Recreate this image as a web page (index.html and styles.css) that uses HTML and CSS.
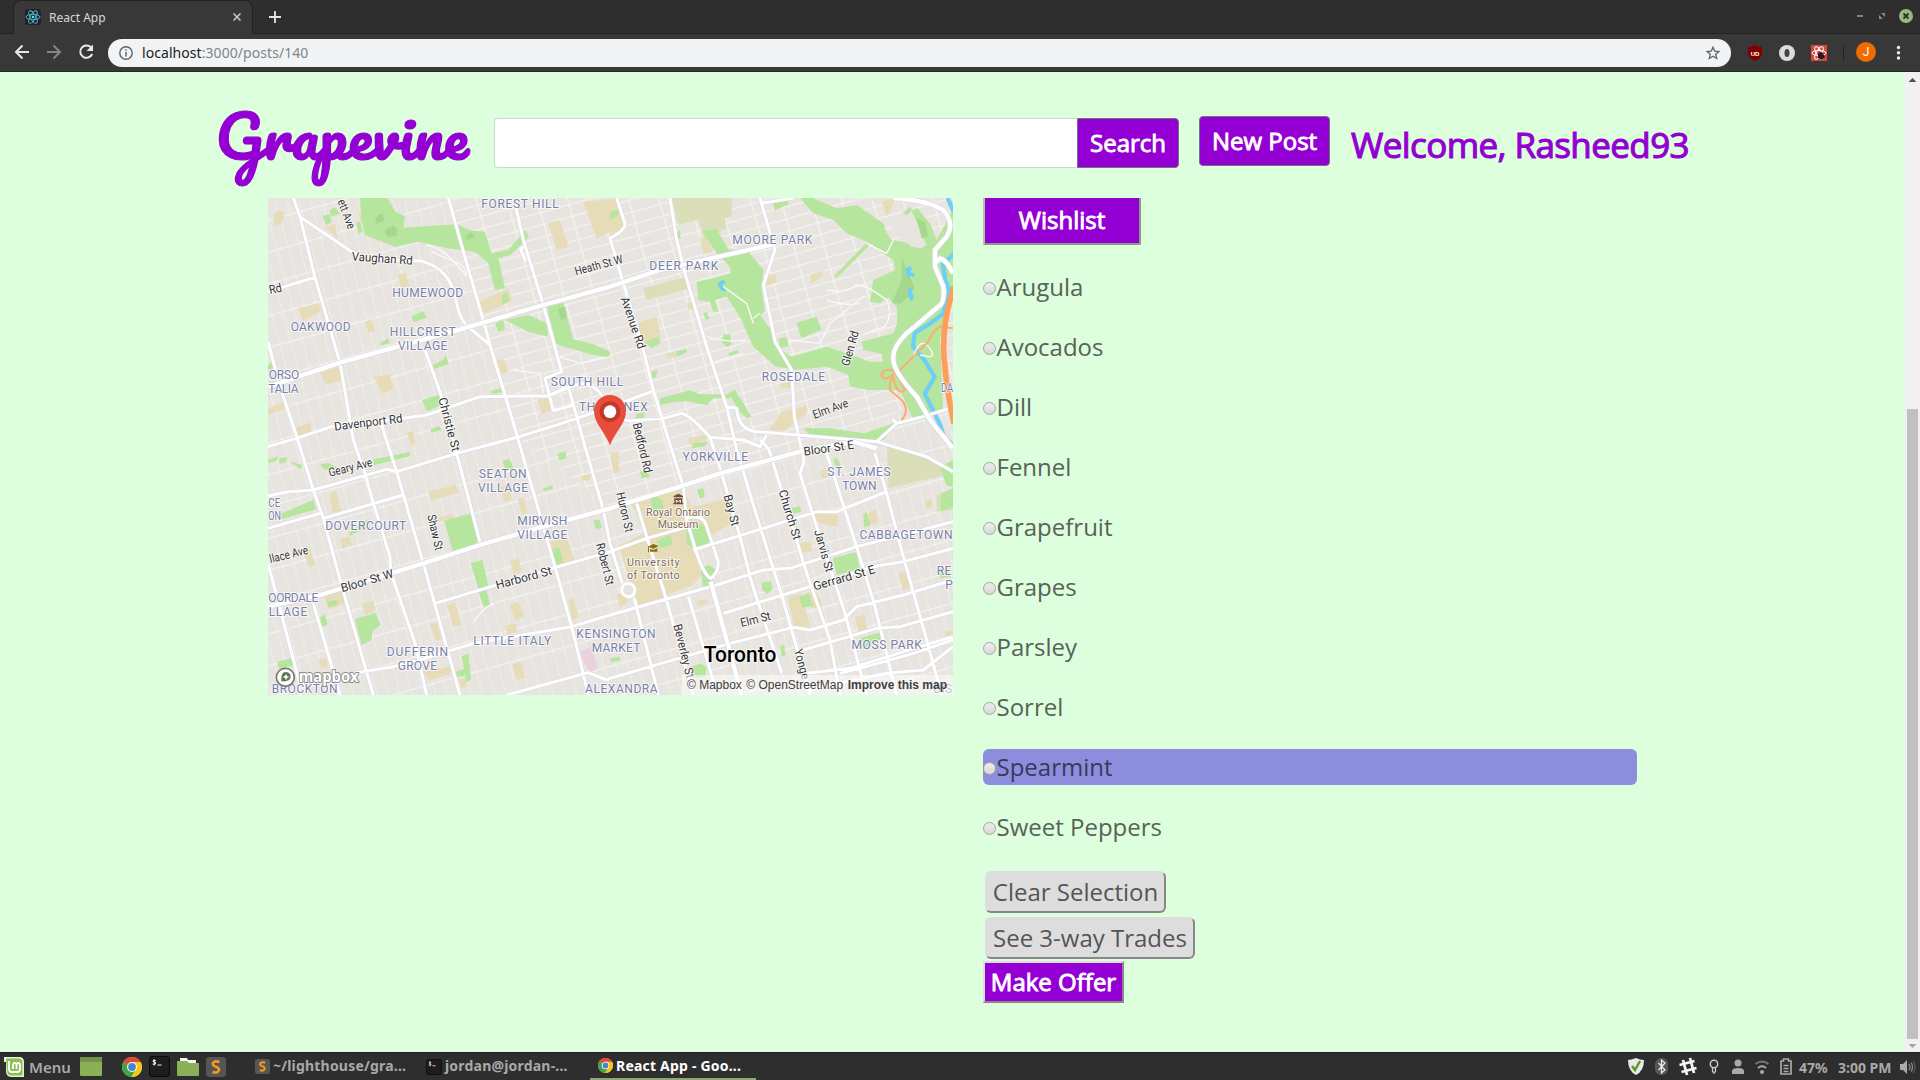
FILE: index.html
```html
<!DOCTYPE html>
<html lang="en">
<head>
<meta charset="utf-8">
<title>React App</title>
<link rel="stylesheet" href="styles.css">
</head>
<body>
<svg width="0" height="0" class="defs">
  <symbol id="chrome" viewBox="0 0 20 20">
    <circle cx="10" cy="10" r="10" fill="#f7c61b"/>
    <path d="M10 10 1.3 5A10 10 0 0 1 18.7 5Z" fill="#e2483a"/>
    <path d="M10 10 1.3 5A10 10 0 0 0 9 20L14 12Z" fill="#3fa24f"/>
    <path d="M10 5h8.7a10 10 0 0 1-9 15L14.3 12.5Z" fill="#f7c61b"/>
    <circle cx="10" cy="10" r="5" fill="#fff"/><circle cx="10" cy="10" r="3.9" fill="#4586c8"/>
  </symbol>
  <symbol id="term" viewBox="0 0 20 20">
    <rect x=".5" y=".5" width="19" height="19" rx="3" fill="#1d1d1d" stroke="#0b0b0b"/>
    <path d="M6.500 4.500C5 3.500 3.800 4.200 4 5s2.300.9 2.300 2S4.500 8.200 3.500 7.500M5 3v6M8 8.500h4" fill="none" stroke="#eee" stroke-width="1"/>
  </symbol>
  <symbol id="subl" viewBox="0 0 20 20">
    <rect width="20" height="20" rx="3" fill="#565656"/>
    <path d="M13.500 5Q9 3.500 7.300 5.500T9 9.300L11.500 10.500Q14 12 12.300 14.200T6.500 15" fill="none" stroke="#f79a1e" stroke-width="2.600"/>
  </symbol>
</svg>
<div class="screen">
  <header class="tabs">
    <div class="tab">
      <svg class="fav" width="16" height="16" viewBox="0 0 16 16"><rect width="16" height="16" rx="2" fill="#20232a"/><g fill="none" stroke="#53b9d1" stroke-width=".9"><ellipse cx="8" cy="8" rx="7" ry="2.700"/><ellipse cx="8" cy="8" rx="7" ry="2.700" transform="rotate(60 8 8)"/><ellipse cx="8" cy="8" rx="7" ry="2.700" transform="rotate(120 8 8)"/></g><circle cx="8" cy="8" r="1.300" fill="#61dafb"/></svg>
      <span class="tab-title">React App</span>
      <svg width="8" height="8" viewBox="0 0 8 8"><path d="M.5.5l7 7M7.500.5l-7 7" stroke="#ccc" stroke-width="1.500"/></svg>
    </div>
    <svg class="plus" width="12" height="12" viewBox="0 0 12 12"><path d="M6 0v12M0 6h12" stroke="#e6e6e6" stroke-width="1.800"/></svg>
    <svg class="winctl" width="58" height="16" viewBox="0 0 58 16"><path d="M2 8h6" stroke="#999" stroke-width="1.600"/><path d="M26 5h4v4zM28 11h-4v-4z" fill="#888"/><circle cx="51" cy="8" r="7" fill="#9ab87c"/><path d="M48.500 5.500l5 5m0-5l-5 5" stroke="#2e2e2e" stroke-width="1.800"/></svg>
  </header>
  <nav class="toolbar">
    <svg width="94" height="20" viewBox="0 0 94 20" class="navicons" fill="none" stroke-width="2">
      <path d="M29 10H16.500M22.500 3.500 16 10l6.500 6.500" stroke="#e8e8e8"/>
      <path d="M47 10h12.500M53.500 3.500 60 10l-6.500 6.500" stroke="#858585"/>
      <path d="M91.500 6A6.200 6.200 0 1 0 92.200 12" stroke="#e8e8e8"/><path d="M93 2.500V9h-6.500z" fill="#e8e8e8"/>
    </svg>
    <div class="omni">
      <svg width="14" height="14" viewBox="0 0 14 14"><circle cx="7" cy="7" r="6.200" fill="none" stroke="#5f6368" stroke-width="1.400"/><path d="M7 6v4.500M7 3.200v1.600" stroke="#5f6368" stroke-width="1.500"/></svg>
      <span class="url"><b>localhost</b>:3000/posts/140</span>
      <svg width="14" height="14" viewBox="0 0 14 14"><path d="M7 1.200 8.700 5.100l4.200.4-3.200 2.800 1 4.200L7 10.300l-3.700 2.200 1-4.200L1.100 5.500l4.200-.4z" fill="none" stroke="#5f6368" stroke-width="1.300"/></svg>
    </div>
    <svg class="ext" width="180" height="26" viewBox="1740 40 180 26">
      <path d="M1755 45q-4 2-7 2v7q1 5 7 7 6-2 7-7v-7q-3 0-7-2z" fill="#800000"/>
      <text x="1755" y="55.500" class="ud">UD</text>
      <circle cx="1787" cy="53" r="8" fill="#dcdcdc"/><ellipse cx="1787" cy="53" rx="2.500" ry="4" fill="#444"/>
      <rect x="1811" y="45" width="16" height="16" fill="#d9473a"/>
      <g fill="none" stroke="#fff" stroke-width="1"><ellipse cx="1819" cy="53" rx="7" ry="2.600"/><ellipse cx="1819" cy="53" rx="7" ry="2.600" transform="rotate(60 1819 53)"/><ellipse cx="1819" cy="53" rx="7" ry="2.600" transform="rotate(120 1819 53)"/></g>
      <path d="M1818 53l4-1 3 5-3 3-4-2z" fill="#2b1717"/>
      <path d="M1843.500 45v16" stroke="#222"/>
      <circle cx="1866" cy="52" r="10" fill="#ef6c00"/><text x="1866" y="56" class="av">J</text>
      <g fill="#eee"><circle cx="1898.500" cy="47.500" r="1.700"/><circle cx="1898.500" cy="52.700" r="1.700"/><circle cx="1898.500" cy="58" r="1.700"/></g>
    </svg>
  </nav>

  <div class="viewport">
    <main class="page">
      <div class="navbar">
        <svg class="brand" width="256" height="90" viewBox="0 0 256 90"><text x="-1.500" y="60" textLength="253" lengthAdjust="spacingAndGlyphs">Grapevine</text></svg>
        <div class="search"><div class="field"></div><div class="btn">Search</div></div>
        <div class="btn newpost">New Post</div>
        <div class="welcome">Welcome, Rasheed93</div>
      </div>
      <div class="content">
        <div class="map">
          <svg width="685" height="497" viewBox="24 24 2055 1491">
            <defs>
              <pattern id="gw" width="34" height="92" patternUnits="userSpaceOnUse" patternTransform="rotate(-15.500)"><path d="M0 0V92M0 2H34" stroke="#f8f7f5" stroke-width="3" fill="none"/></pattern>
              <pattern id="ge" width="88" height="36" patternUnits="userSpaceOnUse" patternTransform="rotate(-15.500)"><path d="M2 0V36M0 2H88" stroke="#f8f7f5" stroke-width="3" fill="none"/></pattern>
            </defs>
            <rect x="24" y="24" width="2055" height="1491" fill="#e8e4df"/>
            <rect x="24" y="24" width="2055" height="1491" fill="url(#gw)"/>
            <path d="M565 24H2079V600L1600 790 1050 950 770 740z" fill="#e8e4df"/>
            <path d="M565 24H2079V600L1600 790 1050 950 770 740z" fill="url(#ge)"/>
            <path class="sand2" d="M1235 24h180v55l-20 5 5 30-65 35-20-60-60 15z M1150 295l130-35 10 35-130 35z M1880 760l200 80-20 15-175 40z M2030 915l49-15v60l-49 5z"/>
            <path class="sand" d="M40 75l15-15 20 10-10 30-20 8z M195 110l30-8 8 45z M115 355l60-15 8 22-55 33z M412 255l25-6 12 40-25 3z M315 395l18-8 12 35-20 6z M180 548l55-18 12 38-50 17z M342 560l45-7 15 42-35 17z M108 712l42-14 5 25-40 15z M24 655l48-17v20l-48 15z M865 98l35-8 25 80-35 10z M970 35l105-10 20 80-85 40z M655 335l90-38 12 35-85 38z M710 510l22-3 12 38-20 10z M832 628l35-5 8 38-30 12z M440 728l20-5 5 38-12 5z M295 65l20 5v30l-12 0z"/>
            <path class="sand" d="M1135 395l55-15 15 75-40 15-30-20z M1050 85l35-5 5 35-40 20z M1215 490l35-5 5 12-30 10z M1320 145l20-5 20 45-30 8z M1520 255l25-3 5 25-30 12z M1650 255l35-12 5 15-35 22z M1865 35l45-11-30 55z M1565 665l75-18v22l-65 55-48-5z M1285 745l55-12v18l-50 15z M1282 340l18-3v18l-15 4z M1560 582l35-8-5 20-25 0z"/>
            <path class="sand" d="M208 910l20-8 15 62-25 4z M506 906l80-22 12 23-85 25z M242 1045l25-5 10 25-30 12z M132 1085l18-8 15 48-20 3z M190 1218l60-15 8 35-50 20z M305 1240l35-8 5 30-30 14z M560 1245l25-6 20 65-25 5z M750 1112l25-6 12 40-25 10z M750 1245l25-10 18 45-28 12z M510 1302l20-4 15 50-18 3z M735 1308l30-8 8 24-30 9z M870 1055l50-10 25 65-55 22z M925 1230l15-5 17 55-20 12z M176 1408l24-5 5 25-22 8z M490 1445l90-18-12 25-60 20z M595 1470l20-5 8 22-18 6z M772 928l20-5 10 45-15 5z M722 890l28-4 5 45-22 4z M530 985l45-12 5 10-45 15z M757 1422l28-7 10 48-25 7z M965 857l28-6-5 18-20 3z"/>
            <path class="sand" d="M1110 935l160-48 25 65 100-25 40 60-80 50-60 20 30 100-30 30-160 60-60-180 85-40z M1050 790l25-5 3 60-18 5z M1160 1205l55-12 5 25-50 20z M1660 970l75 5-5 35-50-10z M1825 965l25-5 5 40-30 4z M1915 1150l25-5 15 50-25 7z M1785 1280l30-5 5 45-25 8z M1585 1222l40-12 25 100-50 2z M1640 1205l40 15 8 30-35 5z M1620 1060l32-6 5 28-30 7z M1680 843l25-6 2 22-22 8z M1995 932l20-4 2 24-20 6z M1070 1212l25-3 10 25-25 20z M1310 1232l30-5 3 12-28 10z M2055 1325l24-5v30h-20z"/>
            <path class="park" d="M300 24h82l25 42 28 12-5 35 160-10 40 18 45 4 20 65 50-10 30-35 20-25 10 15-5 15-50 45-35 10 20 90-30 5-20-80-40-35-80-10-90-20-70 15-90-35-10-45z M188 78l20-6 7 25-16 8z M210 60l15-8 15 20-28 8z M288 100l12-6 8 30-12 8z M455 378l35-14 10 20-40 12z M360 460l25-15 4 15-25 6z M518 525l30-15 10-15 8 28-45 14z M486 630l52-16 5 32-43 18z M512 716l28-8 4 12-30 9z M692 603l30-8 4 12-30 4z M735 390l70-15 55 25 5 40-60-15z M705 400l25-10 5 28-20 8z M860 350l50-12 30 110 60 15 50 22v18l-60-10-100-30z M725 316l15-8 8 25-20 10z M24 525l15-10v20l-15 5z"/>
            <path class="park" d="M1325 122L1370 118 1405 178 1465 185 1510 240 1505 300 1515 365 1500 375 1540 430 1555 475 1595 500 1700 470 1760 490 1830 515 1870 515 1865 492 1810 480 1805 455 1900 430 1912 400 1910 350 1885 322 1860 340 1830 335 1840 270 1905 240 1900 210 1870 190 1830 160 1760 130 1720 90 1660 70 1620 24H1660L1730 55 1790 45 1870 100 1880 130 1895 150 1950 160 1985 130 1950 60 1970 55 2010 100 2030 150 2079 60V290L2040 450 2050 660 2000 685 1960 690 1920 600 1830 600 1770 590 1765 555 1700 530 1600 540 1545 528 1480 470 1440 380 1400 320 1365 330 1375 365 1360 365 1350 335 1315 330 1310 275 1360 265 1412 250 1410 230 1370 190z M1720 260l100-102 12 4-100 100z M1610 398l60-18 14 40-60 24z M1390 435l20-4 5 35-15 5-15-15z M1330 370l10-4 8 20-10 5z M1405 490l28-10 2 10-27 8z M1247 485l30-8 5 10-30 12z M1555 445l25-3 5 27-25 5z M1200 625l90-24 30 12 90 0v12l-50 0-20 20-60-12-50 5-30 8z M1405 610l20-10 50 80-15 5-20-20z M1540 38l38-14 8 18-42 20z M1253 125l8-7v25l-8 3z M1632 715l80 0 100 15 90-30-30 50-220-10z M1128 672l25-5v22l-25 3z M1300 760l45-6-10 15-40 6z M1175 545l18-5-5 22-15 4z M1155 455l40-15 5 20-25 15z M1050 65l25-5v15l-25 15z M2040 830l39-20v80l-20-5z M2043 910l36-15v55l-36 15z"/>
            <path class="park" d="M24 810l30-12-5 15-25 5z M58 805l25-3-5 15-20 5z M90 815l38 10-8 12z M180 822l25-3 30 15-40 5z M340 808l110-22v12l-108 28z M65 970l95-40 8 28-105 30z M267 1028l55-40-2 25-50 24z M552 992l82-22 25 75-15 20-65 20z M632 1120l35-10 20 85-30 8z M655 1205l25-4 10 45-18 5z M285 1287l62-18 15 35-25 20-2 25-30 17z M200 1235l30-6 4 15-30 8z M180 1280l15-6 8 30-18 6z M605 1400l20-10 8 80-15 5z M588 1445l25-8v20l-22 5z M52 1415l50-12 5 22-50 12z M728 812l20-5 15 30-25 4z M892 790l24-5 4 20-22 6z M848 896l28-10 3 10-28 8z M873 1080l25-8 12 45-25 8z M1000 992l18-4 8 25-18 5z"/>
            <path class="park" d="M1172 925l20-5 15 10 5 45-30-5z M1190 1052l42-18 5 30-35 10z M1280 1010l50-8 20 55-40 20-30-15z M1322 1135l25-10 22 15-15 45-25 5z M1310 900l20-5 4 25-15 5z M1595 955l25-7 4 18-25 5z M1718 1105l70-18 12 50-70 18z M1617 1222l28-12 14 38-32 5z M1810 970l10-3 12 40-20 5z M1800 1345l60-18 4 20-30 20-35 10z M1295 1430l30-10 15 15-5 25-30 5z M1560 1370l12-5 5 30-12 5z M1505 1178l28-4 4 25-15 12-15-10z M2032 1140l30-10 10 30-30 5z M1720 807l12-3 10 25-14 3z M1050 1405l28-5 4 12-30 4z M1140 845l20-5 10 20-25 5z"/>
            <path fill="#e8e4df" d="M1930 62l20-16 14 14 50 95-30 20-30-5-60-50z"/>
            <path class="park" d="M1930 68l20-18 6 10-16 16z M1955 62l20-6 40 60 5 60-20-10z"/>
            <path class="wood" d="M380 115l20-8 12 12-3 18-25 5-10-15z M345 85l20-15 10 20-25 12z M895 355l20-5 6 35-20 5z M620 135l15-8 10 15-25 8z M1970 85l25 10 10 45-20 5z M1925 205l40 90-40 45-30 0 30-70z"/>
            <path fill="#ecd0dc" d="M960 1385l35-15 18 65-25 15z"/>
            <path fill="#6dcff6" d="M1372 282l14-12 12 6-12 10 12 8-2 10-12-2z M1937 235l15-8 4 10-6 8 15 8-4 8-10-5-2 10-8-6z M1942 300l10-8 4 12 6 20-8 10-8-12z"/>
            <path class="river" d="M2063 24l18 42M2085 188l-36 35 6 45 14 35-20 68-40 30-45 28-5 40 35 42 30 50-30 50 20 40 25 50 15 45 34 24"/>
            <path class="thin" d="M500 165q60 10 120 95M515 185l90 40q10 10 15 30M1820 160l60 30 20-40M1500 370l-20 15M1700 300q60 10 80-10t100 40q20 40-5 80l-60 20M1700 330q60 20 100 10M1590 450l90 10 30-60 100-80M1480 400l-20-60-70-50M1340 440q70 20 120 10M1350 520l100-30M640 1300q20-40 60-60M900 500l60 20 90-20M760 540l80 10 10 60M1960 500q20-60 45-30t0 30l-25-5"/>
            <use href="#net" class="case"/>
            <g class="road"><path id="net" d="M100 24L120 80 165 262 240 518 280 750 315 850 340 940 390 1100 392 1145 465 1360 500 1515
              M24 455L60 590 112 745 160 900 190 985 250 1205 340 1515
              M24 1120L115 1465 120 1515 M160 1240L240 1515
              M360 690L410 845 490 1120 600 1515
              M495 480L540 605 590 790 662 1065
              M565 24L620 220 670 390 690 465 735 615 775 750 850 1010 885 1130 935 1310 985 1515
              M765 40L790 150 850 345 905 545 855 565 880 662 940 645 M790 170l-8 8 15 35 M865 617L925 590
              M925 590L975 770 1030 960 1050 1060 1087 1180 M1123 1225L1195 1515
              M1070 24L1095 100Q1098 120 1050 145L1080 245 1150 480 1180 600 1235 780 1270 890 1280 990 1310 1090Q1330 1150 1350 1165
              M1280 985Q1330 970 1340 1010L1375 1115Q1375 1150 1350 1168
              M1230 24L1250 150 1275 250 1340 470 1400 650 1430 780 1500 1010 1565 1215 1650 1515
              M1350 742L1385 850 1440 1040 1470 1160 1495 1240 1565 1450
              M1500 24L1545 180 1510 285 1530 380 1545 455 1595 540 1603 680 1625 780 1632 815 1620 850 1660 980 1755 1270 1820 1515
              M1505 40L1600 24
              M1500 750L1525 775 1540 820 1640 1150 1710 1350 1740 1515
              M1700 790L1790 1070 1845 1250 1910 1515 M1845 790L1880 910 1930 1100 2000 1350 2045 1515
              M1130 940L1160 1040 1215 1215 1300 1515 M1285 1220L1365 1490
              M120 80L275 185Q330 215 480 212 530 225 555 255 580 285 590 340 600 395 630 415L690 465
              M24 305L165 262
              M24 770L110 745 215 710 430 685 500 675 660 620 865 617 960 580Q1010 580 1040 640 1070 690 1110 693L1210 685 1265 670Q1290 675 1350 742L1450 750 1500 770 1520 735
              M24 918L85 905 160 900 380 838 410 845 590 790 770 742 890 705 1010 665 1120 625 1180 603
              M24 1015L180 970 M190 985L430 915
              M1400 650L1430 655Q1435 720 1490 725L1650 738 1850 755 2000 800 2079 845
              M1850 755L1910 700 1900 690 1910 700 1990 680 2079 652
              M525 1240L885 1133 1050 1085 1160 1045 1285 1010
              M1300 1080L1510 1015 1670 965 1730 965 1880 905
              M250 1455L400 1430 480 1410 640 1360 935 1310 1050 1275 1370 1185 1510 1140 1590 1135 1790 1070 1890 1045 2079 995
              M1390 1270L1650 1190 1850 1128 1930 1115 2079 1075
              M740 1515L985 1448 1040 1470 1050 1465 1410 1360 1600 1312 1650 1320 1750 1290 1790 1250 1930 1215 2079 1170
              M1630 1380L1850 1315 1920 1310 2079 1265 M1640 1450L1770 1435 1980 1370 2079 1340 M1740 1450L1800 1435 1960 1390 2079 1350 M1640 1500L1880 1450 1990 1440 2079 1370"/></g>
            <circle cx="1105" cy="1200" r="20" fill="#e8e4df" stroke="#fff" stroke-width="8"/>
            <path class="case big" d="M24 590L240 518 600 418 850 345 1050 290 1200 240 1540 163M24 1250L180 1215 490 1120 660 1065 850 1010 1050 955 1260 890 1380 850 1620 785 1780 755 1850 775M1352 1175L1445 1515"/>
            <path class="road big" d="M24 590L240 518 600 418 850 345 1050 290 1200 240 1540 163M24 1250L180 1215 490 1120 660 1065 850 1010 1050 955 1260 890 1380 850 1620 785 1780 755 1850 775M1352 1175L1445 1515"/>
            <path class="ramp" d="M2079 415L2040 410Q2020 420 2005 455L1910 550 1900 500M1910 545Q1870 530 1864 555 1870 580 1910 545 1885 570 1890 600L1925 630Q1950 660 1925 690M1908 550L1935 600Q1910 620 1900 560"/>
            <path fill="none" stroke="#ff9e58" stroke-width="17" d="M2082 290Q2045 400 2052 500T2082 700"/>
            <path class="case big" d="M1900 24Q2000 30 2050 60 2085 100 2060 140L2025 180V230L2050 290Q2055 340 2035 350L1940 430Q1900 470 1900 500 1895 540 1970 620L2010 690 2079 775M2025 220L2040 205Q2060 210 2079 250"/>
            <path class="road big" d="M1900 24Q2000 30 2050 60 2085 100 2060 140L2025 180V230L2050 290Q2055 340 2035 350L1940 430Q1900 470 1900 500 1895 540 1970 620L2010 690 2079 775M2025 220L2040 205Q2060 210 2079 250"/>

            <g class="street">
              <text transform="translate(367 205) rotate(4)" dy=".35em" textLength="183" lengthAdjust="spacingAndGlyphs">Vaughan Rd</text>
              <text transform="translate(1016 225) rotate(-15)" dy=".35em" textLength="148" lengthAdjust="spacingAndGlyphs">Heath St W</text>
              <text transform="translate(46 296) rotate(-12)" dy=".35em" textLength="38" lengthAdjust="spacingAndGlyphs">Rd</text>
              <text transform="translate(260 72) rotate(70)" dy=".35em" textLength="92" lengthAdjust="spacingAndGlyphs">ett Ave</text>
              <text transform="translate(325 697) rotate(-7)" dy=".35em" textLength="206" lengthAdjust="spacingAndGlyphs">Davenport Rd</text>
              <text transform="translate(568 703) rotate(75)" dy=".35em" textLength="165" lengthAdjust="spacingAndGlyphs">Christie St</text>
              <text transform="translate(1120 398) rotate(71)" dy=".35em" textLength="162" lengthAdjust="spacingAndGlyphs">Avenue Rd</text>
              <text transform="translate(1770 475) rotate(-74)" dy=".35em" textLength="108" lengthAdjust="spacingAndGlyphs">Glen Rd</text>
              <text transform="translate(1711 656) rotate(-20)" dy=".35em" textLength="110" lengthAdjust="spacingAndGlyphs">Elm Ave</text>
              <text transform="translate(1148 773) rotate(77)" dy=".35em" textLength="152" lengthAdjust="spacingAndGlyphs">Bedford Rd</text>
              <text transform="translate(1706 774) rotate(-8)" dy=".35em" textLength="152" lengthAdjust="spacingAndGlyphs">Bloor St E</text>
              <text transform="translate(271 832) rotate(-14)" dy=".35em" textLength="134" lengthAdjust="spacingAndGlyphs">Geary Ave</text>
              <text transform="translate(86 1093) rotate(-14)" dy=".35em" textLength="118" lengthAdjust="spacingAndGlyphs">llace Ave</text>
              <text transform="translate(321 1172) rotate(-16)" dy=".35em" textLength="162" lengthAdjust="spacingAndGlyphs">Bloor St W</text>
              <text transform="translate(526 1027) rotate(77)" dy=".35em" textLength="108" lengthAdjust="spacingAndGlyphs">Shaw St</text>
              <text transform="translate(791 1163) rotate(-15)" dy=".35em" textLength="172" lengthAdjust="spacingAndGlyphs">Harbord St</text>
              <text transform="translate(1036 1122) rotate(76)" dy=".35em" textLength="128" lengthAdjust="spacingAndGlyphs">Robert St</text>
              <text transform="translate(1095 966) rotate(77)" dy=".35em" textLength="122" lengthAdjust="spacingAndGlyphs">Huron St</text>
              <text transform="translate(1415 960) rotate(75)" dy=".35em" textLength="96" lengthAdjust="spacingAndGlyphs">Bay St</text>
              <text transform="translate(1590 974) rotate(73)" dy=".35em" textLength="155" lengthAdjust="spacingAndGlyphs">Church St</text>
              <text transform="translate(1692 1082) rotate(74)" dy=".35em" textLength="130" lengthAdjust="spacingAndGlyphs">Jarvis St</text>
              <text transform="translate(1752 1163) rotate(-16)" dy=".35em" textLength="192" lengthAdjust="spacingAndGlyphs">Gerrard St E</text>
              <text transform="translate(1486 1288) rotate(-14)" dy=".35em" textLength="92" lengthAdjust="spacingAndGlyphs">Elm St</text>
              <text transform="translate(1272 1383) rotate(76)" dy=".35em" textLength="165" lengthAdjust="spacingAndGlyphs">Beverley St</text>
              <text transform="translate(1626 1422) rotate(75)" dy=".35em" textLength="92" lengthAdjust="spacingAndGlyphs">Yonge</text>
            </g>
            <g class="area">
              <text x="780" y="54" textLength="232">FOREST HILL</text>
              <text x="503" y="322" textLength="213">HUMEWOOD</text>
              <text x="182" y="424" textLength="180">OAKWOOD</text>
              <text x="488" y="438" textLength="198">HILLCREST</text><text x="488" y="480" textLength="148">VILLAGE</text>
              <text x="72" y="566" textLength="92">ORSO</text><text x="70" y="608" textLength="91">TALIA</text>
              <text x="981" y="588" textLength="217">SOUTH HILL</text>
              <text x="1060" y="662" textLength="206">THE ANNEX</text>
              <text x="1537" y="162" textLength="240">MOORE PARK</text>
              <text x="1271" y="241" textLength="207">DEER PARK</text>
              <text x="1600" y="573" textLength="190">ROSEDALE</text>
              <text x="2061" y="606" textLength="36" lengthAdjust="spacingAndGlyphs">DA</text>
              <text x="728" y="863" textLength="144">SEATON</text><text x="729" y="905" textLength="150">VILLAGE</text>
              <text x="43" y="950" textLength="36" lengthAdjust="spacingAndGlyphs">CE</text><text x="44" y="991" textLength="38" lengthAdjust="spacingAndGlyphs">ON</text>
              <text x="317" y="1020" textLength="243">DOVERCOURT</text>
              <text x="847" y="1005" textLength="150">MIRVISH</text><text x="847" y="1047" textLength="150">VILLAGE</text>
              <text x="100" y="1237" textLength="150">OORDALE</text><text x="84" y="1278" textLength="116">LLAGE</text>
              <text x="472" y="1398" textLength="184">DUFFERIN</text><text x="472" y="1440" textLength="118">GROVE</text>
              <text x="757" y="1366" textLength="234">LITTLE ITALY</text>
              <text x="1068" y="1344" textLength="238">KENSINGTON</text><text x="1068" y="1386" textLength="146">MARKET</text>
              <text x="134" y="1509" textLength="198">BROCKTON</text>
              <text x="1084" y="1509" textLength="218">ALEXANDRA</text>
              <text x="1366" y="813" textLength="197">YORKVILLE</text>
              <text x="1797" y="859" textLength="190">ST. JAMES</text><text x="1798" y="901" textLength="103">TOWN</text>
              <text x="1938" y="1048" textLength="279">CABBAGETOWN</text>
              <text x="2052" y="1155" textLength="44">RE</text><text x="2067" y="1197">P</text>
              <text x="1880" y="1376" textLength="211">MOSS PARK</text>
              <text x="2048" y="1510" textLength="56">DIS</text>
            </g>
            <g class="poi">
              <text x="1254" y="977" textLength="192">Royal Ontario</text><text x="1254" y="1013" textLength="122">Museum</text>
              <text x="1180" y="1128" textLength="158">University</text><text x="1180" y="1168" textLength="158">of Toronto</text>
            </g>
            <path d="M1241 918l14-7 14 7v4h-28zM1243 925h24v14h3v4h-30v-4h3z" fill="#774c3c"/><path d="M1249 938v-8l6 6 6-6v8" fill="none" stroke="#fff" stroke-width="3"/>
            <path d="M1163 1070l17-8 16 6-16 8zM1170 1076l10 4 12-5v10h-22zM1164 1071v16h3v-16z" fill="#8c6d10"/>
            <text class="city" x="1440" y="1417" textLength="218" lengthAdjust="spacingAndGlyphs">Toronto</text>
            <path d="M1050 766C1035 726 1002 700 1002 663a48 48 0 0 1 96 0C1098 700 1065 726 1050 766z" fill="#e74c3c"/>
            <circle cx="1050" cy="665" r="31" fill="#c0392b"/><circle cx="1050" cy="665" r="19" fill="#fff"/>
            <circle cx="76" cy="1462" r="27" fill="#fff" fill-opacity=".9" stroke="#777" stroke-width="5"/>
            <path d="M64 1474q-2-28 14-28 14 2 14 14 0 14-28 14z" fill="#5d7350"/><path d="M78 1451l3 7 7 3-7 3-3 7-3-7-7-3 7-3z" fill="#fff"/>
            <text class="mb" x="206" y="1475" textLength="180" lengthAdjust="spacingAndGlyphs">mapbox</text>
          </svg>
          <div class="attrib"><span>© Mapbox</span> <span>© OpenStreetMap</span> <b>Improve this map</b></div>
        </div>
        <section class="side">
          <div class="wish">Wishlist</div>
          <div class="list">
            <label><i></i>Arugula</label><label><i></i>Avocados</label><label><i></i>Dill</label><label><i></i>Fennel</label><label><i></i>Grapefruit</label><label><i></i>Grapes</label><label><i></i>Parsley</label><label><i></i>Sorrel</label><label class="hover"><i></i>Spearmint</label><label><i></i>Sweet Peppers</label>
          </div>
          <div class="act clear">Clear Selection</div>
          <div class="act three">See 3-way Trades</div>
          <div class="act offer">Make Offer</div>
        </section>
      </div>
    </main>
    <div class="scroll">
      <svg width="15" height="16" viewBox="0 0 15 16"><path d="M3.500 10l4-4 4 4z" fill="#505050"/></svg>
      <div class="thumb"></div>
      <svg width="15" height="13" viewBox="0 0 15 13"><path d="M3.500 5l4 4 4-4z" fill="#a3a3a3"/></svg>
    </div>
  </div>

  <footer class="taskbar">
    <svg class="mint" width="20" height="20" viewBox="0 0 20 20"><path d="M0 0h15q5 0 5 5v15H8q-6 0-6-6V5H0z" fill="#e8f3da"/><path d="M2 1.500h12.500q4 0 4 4v13H8q-5 0-5-5z" fill="#8cc152"/><path d="M5 4v8q0 3 3 3h5q3 0 3-3V8q0-2-1.700-2T12.500 8v4M12.500 8q0-2-1.800-2T9 8v4" fill="none" stroke="#fff" stroke-width="1.800"/></svg>
    <span class="menu">Menu</span>
    <svg class="desk" width="22" height="19" viewBox="0 0 22 19"><rect width="22" height="19" rx="1.500" fill="#8bb158"/><path d="M0 0h22v5H0z" fill="#71944a"/></svg>
    <div class="launch">
      <svg width="20" height="20"><use href="#chrome"/></svg>
      <svg width="21" height="21" viewBox="0 0 20 20"><use href="#term"/></svg>
      <svg width="22" height="20" viewBox="0 0 22 20"><path d="M3 4V1h7l1 2h8v4H3z" fill="#f4f4f4"/><path d="M0 4h10l2 2h10v12q0 1-1 1H1q-1 0-1-1z" fill="#8bb158"/></svg>
      <svg width="20" height="20"><use href="#subl"/></svg>
    </div>
    <div class="task t1"><svg width="15" height="15" viewBox="0 0 20 20"><use href="#subl"/></svg><span>~/lighthouse/gra...</span></div>
    <div class="task t2"><svg width="16" height="16" viewBox="0 0 20 20"><use href="#term"/></svg><span>jordan@jordan-...</span></div>
    <div class="task t3"><svg width="15" height="15" viewBox="0 0 20 20"><use href="#chrome"/></svg><span>React App - Goo...</span></div>
    <svg class="tray" width="170" height="26" viewBox="1625 1053 170 26">
      <path d="M1636 1057q-5 2-8 2 0 11 8 15 8-4 8-15-4 0-8-2z" fill="#e9e9e9"/><path d="M1632 1065l3 4 5-9" stroke="#5a9a28" stroke-width="2.500" fill="none"/>
      <rect x="1655" y="1057" width="13" height="17" rx="6" fill="#565656"/><path d="M1658.500 1062l6.500 7-3.500 3v-13l3.500 3-6.500 7" stroke="#eee" stroke-width="1.200" fill="none"/>
      <path d="M1683 1059l4 15M1690 1057l4 15M1679.500 1064l15-4M1681.500 1071l15-4" stroke="#f4f4f4" stroke-width="2.800"/>
      <circle cx="1714" cy="1063" r="3.700" fill="none" stroke="#c9c9c9" stroke-width="1.500"/><path d="M1712.500 1067v4h3v-4M1714 1071v2" stroke="#c9c9c9" stroke-width="1.200" fill="none"/>
      <circle cx="1738" cy="1062" r="3.500" fill="#a9a9a9"/><path d="M1732 1073v-3q0-3 6-3t6 3v3z" fill="#a9a9a9"/>
      <g fill="none" stroke-width="2"><path d="M1755.500 1063q6.500-5 13 0" stroke="#777"/><path d="M1758 1067q4-3.500 8 0" stroke="#aaa"/></g><circle cx="1762" cy="1071" r="2" fill="#aaa"/>
      <path d="M1781 1060h2.500v-2h5v2h2.500v13h-10z" fill="none" stroke="#aaa" stroke-width="1.700"/><path d="M1783.500 1064.500h5M1783.500 1067.500h5M1783.500 1070.500h5" stroke="#aaa" stroke-width="1.500"/>
    </svg>
    <span class="pct">47%</span><span class="clock">3:00 PM</span>
    <svg class="vol" width="16" height="16" viewBox="0 0 16 16"><path d="M0 5h3l4-4v14L3 11H0z" fill="#aaa"/><g fill="none" stroke="#888" stroke-width="1.300"><path d="M9 5q2 3 0 6M11 3.500q3 4.500 0 9" /><path d="M13 2q4 6 0 12" stroke="#555"/></g></svg>
  </footer>
</div>
</body>
</html>
```
FILE: styles.css
```css
* { box-sizing: border-box; }
body { margin: 0; overflow: hidden; background: #ddffdd; font-family: "Open Sans", sans-serif; }
svg { display: block; flex: none; }
.defs { position: absolute; }
.screen { width: 1920px; height: 1080px; display: flex; flex-direction: column; white-space: nowrap; }

/* browser chrome */
.tabs { height: 34px; background: #2e2e2e; border-bottom: 1px solid #232323; display: flex; padding-left: 13px; font: 12px "Noto Sans", sans-serif; }
.tab { width: 240px; height: 34px; background: #383838; border: 1px solid #222; border-bottom: 0; border-radius: 8px 8px 0 0; display: flex; align-items: center; padding: 0 11px 1px 11px; color: #d8d8d8; }
.tab-title { margin-left: 8px; flex: 1; font-size: 12px; }
.plus { margin: 11px 0 0 16px; }
.winctl { margin: 8px 7px 0 auto; }
.toolbar { height: 38px; background: #383838; border-bottom: 1px solid #262626; display: flex; align-items: center; padding-top: 1px; }
.navicons { margin: -2px 14px 0 0; }
.omni { width: 1623px; height: 28px; border-radius: 14px; background: #f1f3f4; display: flex; align-items: center; padding: 0 11px; }
.url { flex: 1; margin: -1px 0 0 9px; font: 14px "Noto Sans", sans-serif; color: #80868b; letter-spacing: .06px; }
.url b { font-weight: 400; color: #202124; }
.ext { margin-left: 9px; }
.ud { font: bold 6px "Liberation Sans", sans-serif; fill: #fff; text-anchor: middle; }
.av { font: 12px Roboto, sans-serif; fill: #fff; text-anchor: middle; }

/* page */
.viewport { flex: 1; display: flex; height: 980px; background: #ddffdd; }
.page { width: 1905px; }
.navbar { height: 126px; display: flex; align-items: flex-start; padding-left: 217px; }
.brand { margin-top: 28px; overflow: visible; }
.brand text { font: 400 58.5px Pacifico, Lato, cursive; fill: #9400d3; stroke: #9400d3; stroke-width: 1.2px; }
.search { display: flex; margin: 46px 0 0 21px; }
.field { width: 583px; height: 50px; background: #fff; border: 1px solid #ced4da; border-right: 0; border-radius: 4px 0 0 4px; }
.btn { height: 50px; line-height: 48px; background: #9400d3; border: 1px solid #6c757d; color: #fff; font-size: 24px; text-align: center; -webkit-text-stroke: .9px #fff; }
.search .btn { width: 102px; border-radius: 0 4px 4px 0; }
.newpost { width: 131px; border-radius: 4px; margin: 44px 0 0 20px; }
.newpost.btn { line-height: 47px; }
.welcome { margin: 48px 0 0 21px; font-size: 35px; line-height: 49px; color: #9400d3; -webkit-text-stroke: 1.100px #9400d3; letter-spacing: -.6px; }

.content { display: flex; padding-left: 268px; }
.map { width: 685px; height: 497px; position: relative; }
.map svg { overflow: hidden; }
.sand { fill: #e6ddb8; }
.sand2 { fill: #dadfba; }
.park { fill: #b6e59e; }
.wood { fill: #a5d88d; }
.river { fill: none; stroke: #6dcff6; stroke-width: 13; stroke-linejoin: round; }
.thin { fill: none; stroke: #faf9f8; stroke-width: 4; }
.case { fill: none; stroke: #d9d9e6; stroke-width: 12; stroke-linejoin: round; }
.road { fill: none; stroke: #fff; stroke-width: 9; stroke-linejoin: round; }
.case.big { stroke-width: 17; }
.road.big { stroke-width: 13; }
.ramp { fill: none; stroke: #fdad72; stroke-width: 6; }
.map text { text-anchor: middle; font-family: Roboto, sans-serif; paint-order: stroke; stroke: rgba(255, 255, 255, .75); stroke-width: 6px; stroke-linejoin: round; }
.area { font-size: 36px; fill: #7780a8; }
.street { font-size: 36px; fill: #343434; }
.poi { font-size: 32px; fill: #866a5b; }
.map .city { font-size: 64px; font-weight: 500; fill: #000; }
.map .mb { font: bold 50px "Open Sans", sans-serif; fill: #fff; stroke: #8a8a8a; }
.attrib { position: absolute; right: 0; bottom: 0; width: 271px; height: 20px; background: rgba(255, 255, 255, .5); font: 12px/20px "Liberation Sans", sans-serif; color: #404040; padding: 0 6px 0 5px; display: flex; justify-content: space-between; }

.side { margin-left: 30px; width: 654px; display: flex; flex-direction: column; align-items: flex-start; }
.wish { width: 158px; height: 47px; background: #9400d3; border: 2px solid #8b9b83; border-top: 0; border-left-color: #b0c4a8; border-radius: 0 0 2px 2px; color: #fff; font-size: 24px; line-height: 43px; text-align: center; -webkit-text-stroke: .9px #fff; }
.list { width: 654px; display: flex; flex-direction: column; gap: 24px; margin-top: 24px; }
.list label { height: 36px; line-height: 36px; font-size: 24px; color: #586358; display: flex; align-items: center; border-radius: 6px; }
.list i { width: 13px; height: 13px; border-radius: 50%; background: linear-gradient(#eee, #d8d8d8); border: 1px solid #a5a5a5; margin: 3px .5px 0 0; }
.list .hover { background: #8d8dde; color: #39395a; }
.act { height: 42px; font-size: 24px; line-height: 37px; color: #555; background: #ddd; border: 2px solid; border-color: #ddd #888 #888 #ddd; border-radius: 6px; text-align: center; margin-left: 2px; }
.clear { width: 181px; margin-top: 26px; }
.three { width: 210px; margin-top: 4px; }
.offer { width: 141px; margin: 2px 0 0 0; background: #9400d3; color: #fff; border-radius: 0; -webkit-text-stroke: .9px #fff; line-height: 37px; }

.scroll { width: 15px; background: #f1f1f1; display: flex; flex-direction: column; align-items: center; }
.thumb { width: 11px; margin-top: 321px; flex: 1; background: #c1c1c1; }

/* desktop panel */
.taskbar { height: 28px; background: #2e2e2e; border-top: 1px solid #222; display: flex; align-items: center; padding-left: 4px; font: bold 14px "Noto Sans", sans-serif; color: #a9a9a9; }
.menu { width: 42px; margin: 1px 9px 0 5px; font-size: 15px; font-weight: 600; }
.launch { display: flex; align-items: center; gap: 7px; margin-left: 20px; width: 105px; }
.task { display: flex; align-items: center; height: 27px; gap: 3px; }
.task span { letter-spacing: .2px; padding-bottom: 2px; }
.t1 { margin-left: 28px; width: 171px; }
.t2 { width: 164px; }
.t3 { width: 166px; padding-left: 8px; border-bottom: 2px solid #8fa876; color: #fff; }
.t3 span { padding-bottom: 0; }
.tray { margin-left: auto; }
.pct { margin: 2px 0 0 4px; width: 39px; }
.clock { margin-top: 2px; width: 62px; }
.vol { margin-right: 4px; }
```
